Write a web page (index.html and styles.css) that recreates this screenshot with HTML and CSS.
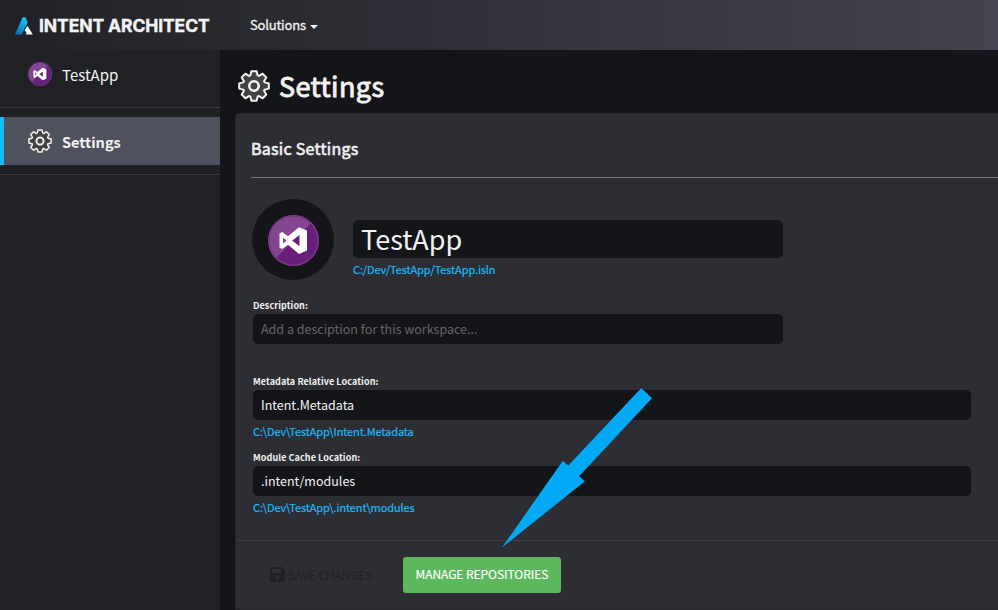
FILE: index.html
```html
<!DOCTYPE html>
<html lang="en">
<head>
<meta charset="utf-8">
<title>Intent Architect</title>
<link rel="stylesheet" href="styles.css">
</head>
<body>
<svg class="defs" aria-hidden="true">
  <symbol id="gear" viewBox="0 0 32 32">
    <g transform="translate(16 16)" stroke="#f2f2f2" stroke-width="2" stroke-linejoin="round">
      <path fill="#434343" d="M-2.6-14.8H2.6L3.6-10.8Q4.4-9.8 5.1-10.2L8.6-12.3L12.3-8.6L10.2-5.1Q9.8-4.4 10.8-3.6L14.8-2.6V2.6L10.8 3.6Q9.8 4.4 10.2 5.1L12.3 8.6L8.6 12.3L5.1 10.2Q4.4 9.8 3.6 10.8L2.6 14.8H-2.6L-3.6 10.8Q-4.4 9.8-5.1 10.2L-8.6 12.3L-12.3 8.6L-10.2 5.1Q-9.8 4.4-10.8 3.6L-14.8 2.6V-2.6L-10.8-3.6Q-9.8-4.4-10.2-5.1L-12.3-8.6L-8.6-12.3L-5.1-10.2Q-4.4-9.8-3.6-10.8Z"/>
      <circle r="4.7" fill="#434343" stroke-width="2.6"/>
    </g>
  </symbol>
  <symbol id="vs" viewBox="0 0 51 51">
    <circle cx="25.5" cy="25.5" r="25.5" fill="#68217a"/>
    <path fill="#824790" d="M42.5 8.5A24 24 0 0 0 8.5 42.5Z"/>
    <circle cx="25.5" cy="25.5" r="24.8" fill="none" stroke="#7c3b8b" stroke-width="1.2"/>
    <path fill="#fff" fill-rule="evenodd" d="M14.2 17L20 21.3L31 12.2L39 15.5V35.5L31 39L20 29.7L14.2 34L11.5 32.5V18.5ZM15 22.5V28.7L18.3 25.6ZM31.5 20L24 25.6L31.5 31.2Z"/>
  </symbol>
</svg>
<header class="topbar">
  <svg class="logo-mark" viewBox="0 0 18 18"><defs><linearGradient id="blue" x1="0" y1="1" x2=".6" y2="0"><stop offset="0" stop-color="#0868b4"/><stop offset="1" stop-color="#15c0ff"/></linearGradient></defs><path fill="url(#blue)" d="M7.6 .3H10.6L12.6 5.6L6.6 17.4H0Z"/><path fill="#fff" d="M12.4 8.8L17.8 17.4H11.2V15L9.6 13.4Z"/></svg>
  <span class="logo-text">INTENT ARCHITECT</span>
  <nav class="menu"><span class="menu-label">Solutions</span><i class="caret"></i></nav>
</header>
<div class="body">
  <aside class="sidebar">
    <div class="side-app"><svg class="side-icon"><use href="#vs"/></svg><span class="side-label">TestApp</span></div>
    <div class="side-group">
      <div class="side-item"><svg class="side-icon"><use href="#gear"/></svg><span class="side-label strong">Settings</span></div>
    </div>
  </aside>
  <main class="main">
    <h1 class="title"><svg class="title-icon"><use href="#gear"/></svg><span class="title-text">Settings</span></h1>
    <section class="card">
      <h2 class="card-title"><span>Basic Settings</span></h2>
      <div class="identity">
        <div class="avatar"><svg class="avatar-icon"><use href="#vs"/></svg></div>
        <div class="name-col">
          <div class="name-input"><span>TestApp</span></div>
          <div class="path"><span>C:/Dev/TestApp/TestApp.isln</span></div>
        </div>
      </div>
      <div class="field">
        <label class="label"><span>Description:</span></label>
        <div class="input short placeholder"><span>Add a desciption for this workspace...</span></div>
      </div>
      <div class="field">
        <label class="label"><span>Metadata Relative Location:</span></label>
        <div class="input"><span>Intent.Metadata</span></div>
        <div class="path"><span>C:\Dev\TestApp\Intent.Metadata</span></div>
      </div>
      <div class="field last">
        <label class="label"><span>Module Cache Location:</span></label>
        <div class="input"><span>.intent/modules</span></div>
        <div class="path"><span>C:\Dev\TestApp\.intent\modules</span></div>
      </div>
      <footer class="actions">
        <div class="save"><svg class="save-icon" viewBox="0 0 15 15"><path fill="#202125" fill-rule="evenodd" d="M1.5 0H12L15 3V13.5Q15 15 13.5 15H1.5Q0 15 0 13.5V1.5Q0 0 1.5 0ZM2 2V6H11V2ZM7.5 8.2A2.3 2.3 0 1 0 7.5 12.8A2.3 2.3 0 1 0 7.5 8.2Z"/></svg><span>SAVE CHANGES</span></div>
        <div class="manage"><span>MANAGE REPOSITORIES</span></div>
      </footer>
    </section>
  </main>
</div>
<svg class="arrow" viewBox="0 0 150 160"><path fill="#03a9f4" d="M0 159.5L60.7 72.9L66.3 77.5L139.3 0L150 10.3L77.3 88L82.7 93.4Z"/></svg>
</body>
</html>
```
FILE: styles.css
```css
* { box-sizing: border-box; }
body {
  margin: 0;
  width: 998px;
  height: 610px;
  overflow: hidden;
  background: #141518;
  color: #f2f2f2;
  font-family: "Noto Sans CJK SC", "Noto Sans", sans-serif;
  font-size: 13px;
}
span { white-space: nowrap; }
.defs { position: absolute; width: 0; height: 0; }
.topbar {
  height: 50px;
  display: flex;
  align-items: center;
  padding-left: 15px;
  background: linear-gradient(90deg, #202125, #43444f);
}
.logo-mark { flex: none; width: 18px; height: 18px; margin-top: 2px; }
.logo-text {
  width: 211px;
  padding-left: 6px;
  font: 700 17.5px/24px Inter, sans-serif;
  letter-spacing: -.1px;
  margin-top: 2px;
  -webkit-text-stroke: .4px;
}
.menu { display: flex; align-items: center; padding-left: 6px; }
.menu-label { line-height: 20px; letter-spacing: -.2px; -webkit-text-stroke: .3px; }
.caret { margin: 3px 0 0 4px; border: 4px solid transparent; border-top-color: #f2f2f2; border-bottom: 0; }
.body { display: flex; height: 560px; }
.sidebar { width: 220px; background: #202125; }
.side-app { height: 58px; padding: 12px 0 0 28px; display: flex; border-bottom: 1px solid #3b3c42; }
.side-icon { width: 24px; height: 24px; margin-right: 10px; }
.side-label { font-size: 15px; line-height: 26px; }
.side-group { padding: 9px 0; border-bottom: 1px solid #3b3c42; }
.side-item { height: 48px; display: flex; padding: 12px 0 0 24px; border-left: 4px solid #0dbfff; background: #4f525c; }
.strong { font-size: 14.5px; font-weight: 700; }
.main { flex: 1; min-width: 0; padding-left: 15px; }
.title { margin: 0; height: 63px; padding: 20px 0 0 3px; display: flex; }
.title-icon { width: 32px; height: 32px; margin-right: 9px; }
.title-text { font-size: 27px; font-weight: 400; line-height: 32px; letter-spacing: .4px; -webkit-text-stroke: .9px; }
.card { height: 497px; border: 1px solid #25262a; border-right: 0; border-radius: 4px 0 0 0; background: #2d2e33; }
.card-title { margin: 0 0 0 15px; height: 64px; padding-top: 22px; font-size: 16px; font-weight: 400; line-height: 24px; letter-spacing: .27px; -webkit-text-stroke: .6px; border-bottom: 1px solid #75767a; }
.identity { display: flex; padding: 21px 0 0 16px; height: 121px; }
.avatar { width: 82px; height: 81px; padding-top: 1px; margin: 0 19px 0 0; border-radius: 50%; background: #141518; display: flex; align-items: center; justify-content: center; }
.avatar-icon { width: 51px; height: 51px; }
.name-col { padding-top: 21px; }
.name-input { width: 430px; height: 38px; padding-left: 8px; border-radius: 5px; background: #141518; font-size: 27px; line-height: 37px; }
.path { height: 24px; color: #18b9f8; font-size: 11px; line-height: 23px; letter-spacing: -.12px; -webkit-text-stroke: .2px; }
.field { margin-left: 17px; height: 76px; }
.field.last { height: 89px; }
.label { display: block; height: 15px; font-size: 9px; font-weight: 700; line-height: 13px; letter-spacing: .09px; }
.input { width: 718px; height: 30px; padding-left: 8px; border-radius: 5px; background: #141518; font-size: 12.5px; line-height: 30px; }
.input.short { width: 530px; }
.placeholder { color: #65666a; }
.actions { height: 68px; border-top: 1px solid #3a3b40; padding: 16px 0 0 34px; display: flex; }
.save { width: 133px; height: 34px; display: flex; align-items: center; color: #202125; font-size: 12px; letter-spacing: -.1px; }
.save-icon { width: 15px; height: 15px; margin-right: 3px; }
.manage { width: 158px; height: 36px; padding-left: 12.5px; border-radius: 3px; background: #5cb85c; color: #fff; line-height: 34px; font-size: 12px; letter-spacing: -.06px; -webkit-text-stroke: .15px; }
.arrow { position: absolute; left: 502px; top: 388px; width: 150px; height: 160px; }
```
